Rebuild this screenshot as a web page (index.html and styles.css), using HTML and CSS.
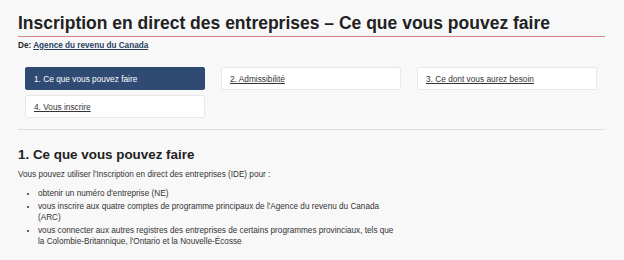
FILE: index.html
```html
<!DOCTYPE html>
<html lang="fr">
<head>
<meta charset="utf-8">
<link rel="stylesheet" href="styles.css">
</head>
<body>
<main class="page">
  <h1 class="title">Inscription en direct des entreprises – Ce que vous pouvez faire</h1>
  <p class="from"><strong>De: </strong><a href="#">Agence du revenu du Canada</a></p>
  <nav class="steps">
    <a class="step active" href="#">1. Ce que vous pouvez faire</a>
    <a class="step" href="#">2. Admissibilité</a>
    <a class="step" href="#">3. Ce dont vous aurez besoin</a>
    <a class="step" href="#">4. Vous inscrire</a>
  </nav>
  <hr class="sep">
  <section class="content">
    <h2 class="sub">1. Ce que vous pouvez faire</h2>
    <p class="intro">Vous pouvez utiliser l'Inscription en direct des entreprises (IDE) pour :</p>
    <ul class="list">
      <li>obtenir un numéro d'entreprise (NE)</li>
      <li>vous inscrire aux quatre comptes de programme principaux de l'Agence du revenu du Canada (ARC)</li>
      <li>vous connecter aux autres registres des entreprises de certains programmes provinciaux, tels que la Colombie-Britannique, l'Ontario et la Nouvelle-Écosse</li>
    </ul>
  </section>
</main>
</body>
</html>
```
FILE: styles.css
```css
html, body {
  margin: 0;
  padding: 0;
  background: #f8f8f8;
}
body {
  font-family: "Liberation Sans", Arial, sans-serif;
  color: #333;
}
.page {
  padding: 0 19px 0 18px;
}
.title {
  margin: 0;
  padding-top: 11px;
  padding-bottom: 1px;
  font-size: 17.5px;
  line-height: 24px;
  font-weight: bold;
  color: #222;
  border-bottom: 1px solid #d4848a;
}
.from {
  margin: 3px 0 0;
  font-size: 8.2px;
  line-height: 12px;
  color: #222;
}
.from a {
  color: #284162;
  font-weight: bold;
}
.steps {
  display: grid;
  grid-template-columns: repeat(3, 180px);
  column-gap: 16px;
  row-gap: 5px;
  margin: 15px 0 0 7px;
}
.step {
  display: flex;
  align-items: center;
  height: 21px;
  padding: 0 8px;
  background: #fff;
  border: 1px solid #e8e8e8;
  border-radius: 2px;
  font-size: 8.3px;
  color: #333;
}
.step.active {
  background: #2f4a73;
  border-color: #2f4a73;
  color: #fff;
  text-decoration: none;
}
.sep {
  margin: 11px 0 0;
  border: 0;
  border-top: 1px solid #e0e0e0;
}
.content {
  max-width: 384px;
}
.sub {
  margin: 17px 0 0;
  font-size: 13.4px;
  line-height: 16px;
  color: #222;
}
.intro {
  margin: 6px 0 0;
  font-size: 8.2px;
  line-height: 11px;
  color: #333;
}
.list {
  margin: 8px 0 0;
  padding-left: 20px;
  font-size: 8.2px;
  line-height: 11px;
  color: #333;
}
.list li {
  margin-bottom: 2px;
}
```
